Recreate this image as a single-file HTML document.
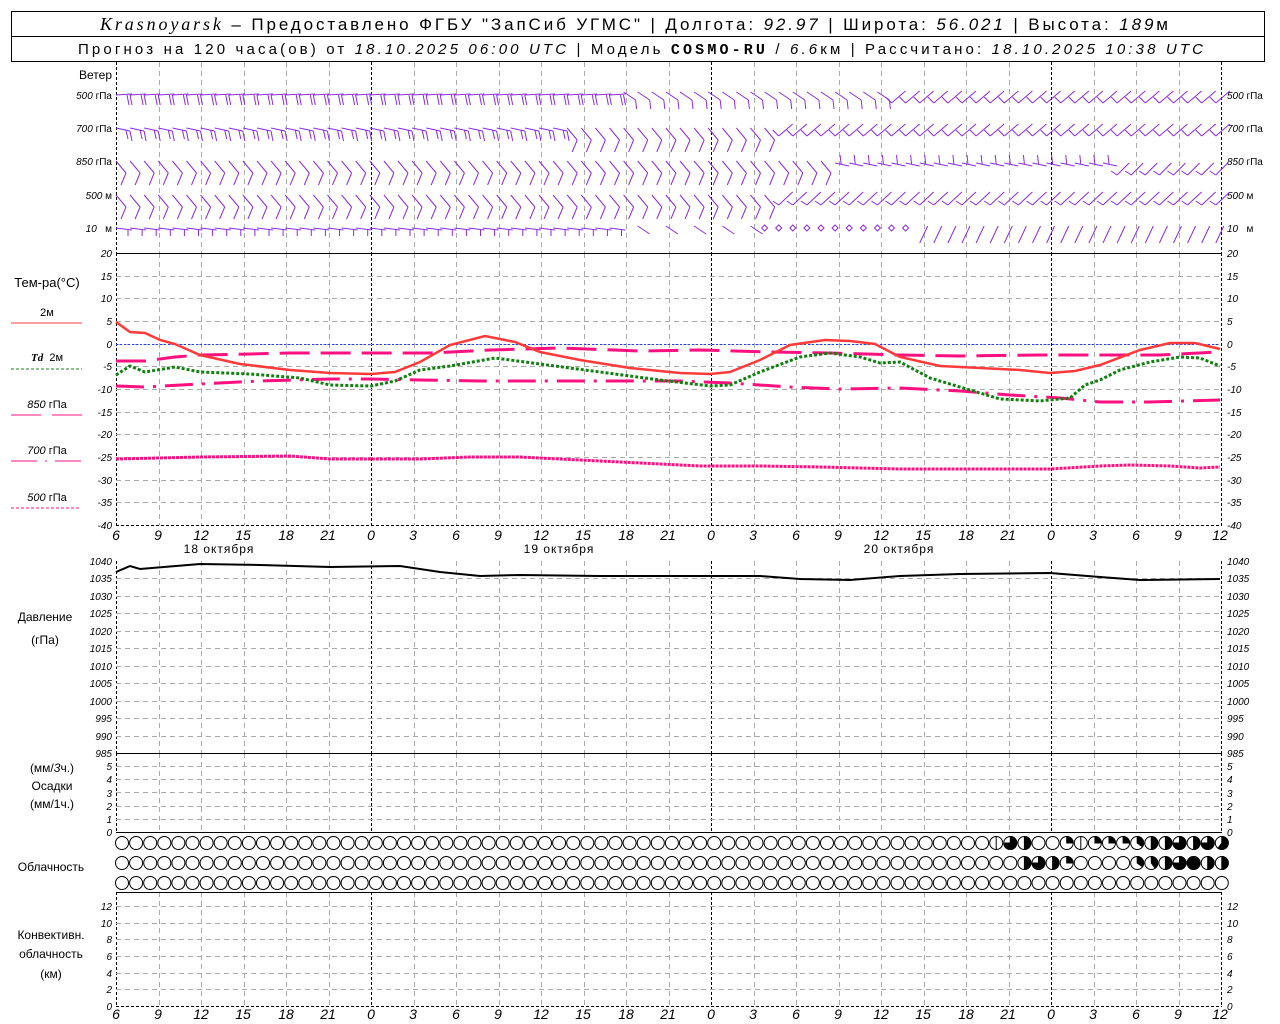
<!DOCTYPE html>
<html><head><meta charset="utf-8"><style>
html,body{margin:0;padding:0;background:#fff;width:1280px;height:1024px;overflow:hidden}
svg{position:absolute;left:0;top:0}
text{font-family:"Liberation Sans",sans-serif;font-size:11px;fill:#000}
.n{font-style:italic;font-size:10px}
.tl{font-style:italic;font-size:14px}
.h{font-size:17px}
.h2{font-size:15px}
.lb{font-size:12px}
</style></head><body>
<svg id="s" width="1280" height="1024" xmlns="http://www.w3.org/2000/svg">
<g id="grid"></g>
<!-- header -->
<rect x="11.5" y="11.5" width="1253" height="50" fill="none" stroke="#000"/>
<line x1="11" y1="36.5" x2="1265" y2="36.5" stroke="#000"/>
<text x="100" y="30" class="h" textLength="1068" lengthAdjust="spacing"><tspan font-family="Liberation Serif" font-style="italic" style="font-size:18px">Krasnoyarsk</tspan> – Предоставлено ФГБУ "ЗапСиб УГМС" | Долгота: <tspan font-style="italic">92.97</tspan> | Широта: <tspan font-style="italic">56.021</tspan> | Высота: <tspan font-style="italic">189</tspan>м</text>
<text x="78" y="54" class="h2" textLength="1125" lengthAdjust="spacing">Прогноз на 120 часа(ов) от <tspan font-style="italic">18.10.2025 06:00 UTC</tspan> | Модель <tspan font-family="Liberation Mono" font-weight="bold">COSMO-RU</tspan> / <tspan font-style="italic">6.6</tspan>км | Рассчитано: <tspan font-style="italic">18.10.2025 10:38 UTC</tspan></text>
<!-- left labels -->
<g text-anchor="end">
<text x="112" y="79" class="lb">Ветер</text>
<text x="112" y="99" class="n">500 <tspan font-style="normal">гПа</tspan></text>
<text x="112" y="132" class="n">700 <tspan font-style="normal">гПа</tspan></text>
<text x="112" y="165" class="n">850 <tspan font-style="normal">гПа</tspan></text>
<text x="112" y="199" class="n">500 <tspan font-style="normal">м</tspan></text>
<text x="112" y="232" class="n">10 &#160; <tspan font-style="normal">м</tspan></text>
</g>
<g>
<text x="1227" y="99" class="n">500 <tspan font-style="normal">гПа</tspan></text>
<text x="1227" y="132" class="n">700 <tspan font-style="normal">гПа</tspan></text>
<text x="1227" y="165" class="n">850 <tspan font-style="normal">гПа</tspan></text>
<text x="1227" y="199" class="n">500 <tspan font-style="normal">м</tspan></text>
<text x="1227" y="232" class="n">10 &#160; <tspan font-style="normal">м</tspan></text>
</g>
<text x="47" y="287" text-anchor="middle" class="lb" style="font-size:13px">Тем-ра(°C)</text>
<text x="47" y="316" text-anchor="middle">2м</text>
<line x1="11" y1="323" x2="82" y2="323" stroke="#ff4040"/>
<text x="47" y="361" text-anchor="middle"><tspan font-style="italic" font-family="Liberation Serif" font-weight="bold">Td</tspan> &#160;2м</text>
<line x1="11" y1="369" x2="82" y2="369" stroke="#208020" stroke-dasharray="3,2"/>
<text x="47" y="408" text-anchor="middle" class="n" style="font-size:11px">850 <tspan font-style="normal">гПа</tspan></text>
<line x1="11" y1="415" x2="82" y2="415" stroke="#ff1080" stroke-dasharray="30,11"/>
<text x="47" y="454" text-anchor="middle" class="n" style="font-size:11px">700 <tspan font-style="normal">гПа</tspan></text>
<line x1="11" y1="461" x2="82" y2="461" stroke="#ff1080" stroke-dasharray="26,8,2,8"/>
<text x="47" y="501" text-anchor="middle" class="n" style="font-size:11px">500 <tspan font-style="normal">гПа</tspan></text>
<line x1="11" y1="508" x2="79" y2="508" stroke="#ff1080" stroke-dasharray="3,2"/>
<text x="45" y="621" text-anchor="middle" class="lb">Давление</text>
<text x="45" y="644" text-anchor="middle" class="lb">(гПа)</text>
<text x="52" y="772" text-anchor="middle" class="lb">(мм/<tspan font-style="italic">3</tspan>ч.)</text>
<text x="52" y="790" text-anchor="middle" class="lb">Осадки</text>
<text x="52" y="808" text-anchor="middle" class="lb">(мм/1ч.)</text>
<text x="51" y="871" text-anchor="middle" class="lb">Облачность</text>
<text x="51" y="939" text-anchor="middle" class="lb">Конвективн.</text>
<text x="51" y="958" text-anchor="middle" class="lb">облачность</text>
<text x="51" y="978" text-anchor="middle" class="lb">(км)</text>
<!-- axes -->
<g text-anchor="end">
<text x="112" y="257" class="n">20</text><text x="112" y="280" class="n">15</text><text x="112" y="302" class="n">10</text><text x="112" y="325" class="n">5</text><text x="112" y="348" class="n">0</text><text x="112" y="370" class="n">-5</text><text x="112" y="393" class="n">-10</text><text x="112" y="416" class="n">-15</text><text x="112" y="438" class="n">-20</text><text x="112" y="461" class="n">-25</text><text x="112" y="484" class="n">-30</text><text x="112" y="506" class="n">-35</text><text x="112" y="529" class="n">-40</text>
<text x="112" y="565" class="n">1040</text><text x="112" y="582" class="n">1035</text><text x="112" y="600" class="n">1030</text><text x="112" y="617" class="n">1025</text><text x="112" y="635" class="n">1020</text><text x="112" y="652" class="n">1015</text><text x="112" y="670" class="n">1010</text><text x="112" y="687" class="n">1005</text><text x="112" y="705" class="n">1000</text><text x="112" y="722" class="n">995</text><text x="112" y="740" class="n">990</text><text x="112" y="757" class="n">985</text>
<text x="112" y="770" class="n">5</text><text x="112" y="783" class="n">4</text><text x="112" y="797" class="n">3</text><text x="112" y="810" class="n">2</text><text x="112" y="823" class="n">1</text><text x="112" y="836" class="n">0</text>
<text x="112" y="910" class="n">12</text><text x="112" y="927" class="n">10</text><text x="112" y="943" class="n">8</text><text x="112" y="960" class="n">6</text><text x="112" y="977" class="n">4</text><text x="112" y="993" class="n">2</text><text x="112" y="1010" class="n">0</text>
</g>
<g>
<text x="1227" y="257" class="n">20</text><text x="1227" y="280" class="n">15</text><text x="1227" y="302" class="n">10</text><text x="1227" y="325" class="n">5</text><text x="1227" y="348" class="n">0</text><text x="1227" y="370" class="n">-5</text><text x="1227" y="393" class="n">-10</text><text x="1227" y="416" class="n">-15</text><text x="1227" y="438" class="n">-20</text><text x="1227" y="461" class="n">-25</text><text x="1227" y="484" class="n">-30</text><text x="1227" y="506" class="n">-35</text><text x="1227" y="529" class="n">-40</text>
<text x="1227" y="565" class="n">1040</text><text x="1227" y="582" class="n">1035</text><text x="1227" y="600" class="n">1030</text><text x="1227" y="617" class="n">1025</text><text x="1227" y="635" class="n">1020</text><text x="1227" y="652" class="n">1015</text><text x="1227" y="670" class="n">1010</text><text x="1227" y="687" class="n">1005</text><text x="1227" y="705" class="n">1000</text><text x="1227" y="722" class="n">995</text><text x="1227" y="740" class="n">990</text><text x="1227" y="757" class="n">985</text>
<text x="1227" y="770" class="n">5</text><text x="1227" y="783" class="n">4</text><text x="1227" y="797" class="n">3</text><text x="1227" y="810" class="n">2</text><text x="1227" y="823" class="n">1</text><text x="1227" y="836" class="n">0</text>
<text x="1227" y="910" class="n">12</text><text x="1227" y="927" class="n">10</text><text x="1227" y="943" class="n">8</text><text x="1227" y="960" class="n">6</text><text x="1227" y="977" class="n">4</text><text x="1227" y="993" class="n">2</text><text x="1227" y="1010" class="n">0</text>
</g>
<!-- time labels -->
<g text-anchor="middle">
<text x="116" y="540" class="tl">6</text><text x="158" y="540" class="tl">9</text><text x="201" y="540" class="tl">12</text><text x="243" y="540" class="tl">15</text><text x="286" y="540" class="tl">18</text><text x="328" y="540" class="tl">21</text><text x="371" y="540" class="tl">0</text><text x="413" y="540" class="tl">3</text><text x="456" y="540" class="tl">6</text><text x="498" y="540" class="tl">9</text><text x="541" y="540" class="tl">12</text><text x="583" y="540" class="tl">15</text><text x="626" y="540" class="tl">18</text><text x="668" y="540" class="tl">21</text><text x="711" y="540" class="tl">0</text><text x="753" y="540" class="tl">3</text><text x="796" y="540" class="tl">6</text><text x="838" y="540" class="tl">9</text><text x="881" y="540" class="tl">12</text><text x="923" y="540" class="tl">15</text><text x="966" y="540" class="tl">18</text><text x="1008" y="540" class="tl">21</text><text x="1051" y="540" class="tl">0</text><text x="1093" y="540" class="tl">3</text><text x="1136" y="540" class="tl">6</text><text x="1178" y="540" class="tl">9</text><text x="1220" y="540" class="tl">12</text>
<text x="116" y="1019" class="tl">6</text><text x="158" y="1019" class="tl">9</text><text x="201" y="1019" class="tl">12</text><text x="243" y="1019" class="tl">15</text><text x="286" y="1019" class="tl">18</text><text x="328" y="1019" class="tl">21</text><text x="371" y="1019" class="tl">0</text><text x="413" y="1019" class="tl">3</text><text x="456" y="1019" class="tl">6</text><text x="498" y="1019" class="tl">9</text><text x="541" y="1019" class="tl">12</text><text x="583" y="1019" class="tl">15</text><text x="626" y="1019" class="tl">18</text><text x="668" y="1019" class="tl">21</text><text x="711" y="1019" class="tl">0</text><text x="753" y="1019" class="tl">3</text><text x="796" y="1019" class="tl">6</text><text x="838" y="1019" class="tl">9</text><text x="881" y="1019" class="tl">12</text><text x="923" y="1019" class="tl">15</text><text x="966" y="1019" class="tl">18</text><text x="1008" y="1019" class="tl">21</text><text x="1051" y="1019" class="tl">0</text><text x="1093" y="1019" class="tl">3</text><text x="1136" y="1019" class="tl">6</text><text x="1178" y="1019" class="tl">9</text><text x="1220" y="1019" class="tl">12</text>
</g>
<g text-anchor="middle">
<text x="219" y="553" class="lb" style="letter-spacing:1px">18 октября</text><text x="559" y="553" class="lb" style="letter-spacing:1px">19 октября</text><text x="899" y="553" class="lb" style="letter-spacing:1px">20 октября</text>
</g>
<!-- curves -->
<line x1="116" y1="344.5" x2="1220" y2="344.5" stroke="#2040ff" stroke-dasharray="2,2"/>
<polyline fill="none" stroke="#ff1080" stroke-width="3" stroke-dasharray="3,1" points="116,459 200,457 290,456 330,459 371,459 420,459 470,457 520,457 560,459 600,461 640,463 700,466 760,466 820,467 860,468 900,469 960,469 1050,469 1100,466 1130,465 1170,466 1200,468 1220,467"/>
<polyline fill="none" stroke="#ff1080" stroke-width="3" stroke-dasharray="28,9,3,9" points="116,386 145,387 200,384 260,381 330,379 371,379 420,380 480,381 540,381 600,381 680,381 730,383 790,387 840,389 900,388 960,391 1010,395 1060,398 1100,402 1150,402 1220,400"/>
<polyline fill="none" stroke="#ff1080" stroke-width="3" stroke-dasharray="30,11" points="116,361 145,361 175,357 200,355 250,354 290,353 371,353 430,353 490,350 560,348 640,351 700,350 770,352 830,353 900,355 960,356 1040,355 1100,355 1160,355 1220,352"/>
<polyline fill="none" stroke="#108010" stroke-width="3" stroke-dasharray="3,2" points="116,375 130,366 145,372 175,367 200,372 250,374 300,378 330,385 371,386 395,381 420,370 450,366 495,358 540,364 600,372 660,380 710,386 730,385 760,372 800,357 830,353 860,357 880,363 900,362 930,378 970,390 1000,399 1040,401 1070,398 1085,385 1100,380 1120,370 1150,362 1180,357 1200,358 1220,366"/>
<polyline fill="none" stroke="#ff3a3a" stroke-width="2.5" points="116,322 130,332 145,333 160,340 175,344 200,355 240,364 290,370 330,373 371,374 395,372 420,362 450,345 485,336 515,342 540,352 580,360 630,368 680,373 710,374 730,372 760,360 790,345 825,340 850,341 875,344 900,357 940,366 980,368 1020,370 1050,373 1075,371 1100,365 1140,350 1170,343 1195,343 1220,349"/>
<polyline fill="none" stroke="#000" stroke-width="2" points="116,572 130,566 140,569 200,564 260,565 330,567 400,566 440,572 480,576 520,575 600,576 700,576 760,576 800,579 850,580 900,576 960,574 1050,573 1100,577 1140,580 1220,579"/>
<g id="wind" stroke="#8a2be2" stroke-width="1" fill="none"></g>
<g id="cloud" stroke="#000" stroke-width="1"></g>
</svg>
<script>
var NS="http://www.w3.org/2000/svg";
function el(p,t,a){var e=document.createElementNS(NS,t);for(var k in a)e.setAttribute(k,a[k]);p.appendChild(e);return e;}
var g=document.getElementById('grid');
var panels=[[62,253],[253,525],[561,753],[753,832],[892,1006]];
for(var i=0;i<=38;i++){
  var x=Math.round(116+i*42.5)+0.5; if(x>1222)break;
  var day=(i%8==6)||i==0||x>=1220;
  panels.forEach(function(p){el(g,'line',{x1:x,y1:p[0],x2:x,y2:p[1],stroke:day?'#000':'#aaa','stroke-dasharray':day?'3,2':'5,4'});});
}
function hl(y,solid){el(g,'line',{x1:116,y1:y,x2:1220,y2:y,stroke:solid?'#000':'#aaa','stroke-dasharray':solid?'':'5,4'});}
for(var k=1;k<12;k++)hl(Math.round(253+k*22.67)+0.5);
for(var k=1;k<11;k++)hl(Math.round(561+k*17.45)+0.5);
for(var k=1;k<6;k++)hl(Math.round(766+(k-1)*13.2)+0.5);
for(var k=1;k<7;k++)hl(Math.round(906+(k-1)*16.67)+0.5);
[253.5,753.5,832.5,892.5].forEach(function(y){el(g,'line',{x1:116,y1:y,x2:1222,y2:y,stroke:'#000'});});
el(g,'line',{x1:116,y1:525.5,x2:1222,y2:525.5,stroke:'#000','stroke-dasharray':'3,2'});
el(g,'line',{x1:116,y1:1006.5,x2:1222,y2:1006.5,stroke:'#000','stroke-dasharray':'3,2'});
var w=document.getElementById('wind');
function L(a,b,c,d){el(w,'line',{x1:a,y1:b,x2:c,y2:d});}
var rows=[95,128,161,195,228];
for(var i=0;i<79;i++){
  var x=116+i*14.1, f=i/78;
  rows.forEach(function(y,r){
    if(r==0){
      if(f<0.45){L(x,y,x+16,y-1);L(x+14,y,x+16,y+10);L(x+11,y,x+13,y+10);}
      else if(f<0.7){L(x,y-3,x+12,y+5);L(x+12,y+5,x+13,y+14);}
      else{L(x,y+8,x+14,y-4);L(x,y+8,x-6,y+2);}
    }else if(r==1){
      if(f<0.4){L(x,y,x+14,y+3);L(x+14,y+3,x+16,y+13);L(x+10,y+2,x+12,y+11);}
      else if(f<0.6){L(x,y,x+10,y+12);L(x+10,y+12,x+5,y+24);}
      else{L(x,y+8,x+14,y-4);L(x,y+8,x-6,y+2);}
    }else if(r==2){
      if(f<0.65){L(x,y,x+10,y+12);L(x+10,y+12,x+5,y+24);}
      else if(f<0.9){L(x,y+2,x+14,y+5);L(x+6,y+3,x+5,y-6);}
      else{L(x,y+14,x+12,y+2);L(x,y+14,x-6,y+10);}
    }else if(r==3){
      if(f<0.6){L(x,y,x+10,y+12);L(x+10,y+12,x+5,y+24);}
      else{L(x,y+10,x+14,y-3);L(x,y+10,x-6,y+6);}
    }else{
      if(f<0.45){L(x,y,x+16,y+2);L(x+12,y+2,x+12,y+8);}
      else if(f<0.58){if(i%2)L(x,y-2,x+12,y+6);}
      else if(f<0.72){el(w,'path',{d:'M'+x+' '+(y-3)+'l3 3-3 3-3-3z'});}
      else{L(x,y+15,x+8,y-2);}
    }
  });
}
var c=document.getElementById('cloud');
var r1=[0,0,0.05,0.75,0.5,0,0,0.25,0.05,0.25,0.25,0.25,0.35,0.5,0.5,0.75,0.5,0.75,0.6];
var r2=[0,0,0,0,0.5,0.75,0.5,0.25,0,0,0,0,0.35,0.4,0.5,0.75,1,0.5,0.5];
var cy=[843,863,883];
for(var i=0;i<79;i++){
  var x=122+i*14.1;
  for(var r=0;r<3;r++){
    var fr=0,j=i-60;
    if(j>=0){fr=r==0?r1[j]:r==1?r2[j]:0;}
    el(c,'circle',{cx:x,cy:cy[r],r:6.5,fill:'#fff'});
    if(fr>=1)el(c,'circle',{cx:x,cy:cy[r],r:6.5,fill:'#000'});
    else if(fr>0.1){var a=fr*2*Math.PI,ex=x+6.5*Math.sin(a),ey=cy[r]-6.5*Math.cos(a);
      el(c,'path',{d:'M'+x+' '+cy[r]+'L'+x+' '+(cy[r]-6.5)+'A6.5 6.5 0 '+(fr>0.5?1:0)+' 1 '+ex+' '+ey+'Z',fill:'#000'});}
    else if(fr>0)el(c,'line',{x1:x,y1:cy[r]-6.5,x2:x,y2:cy[r]+6.5});
  }
}
</script>
</body></html>
